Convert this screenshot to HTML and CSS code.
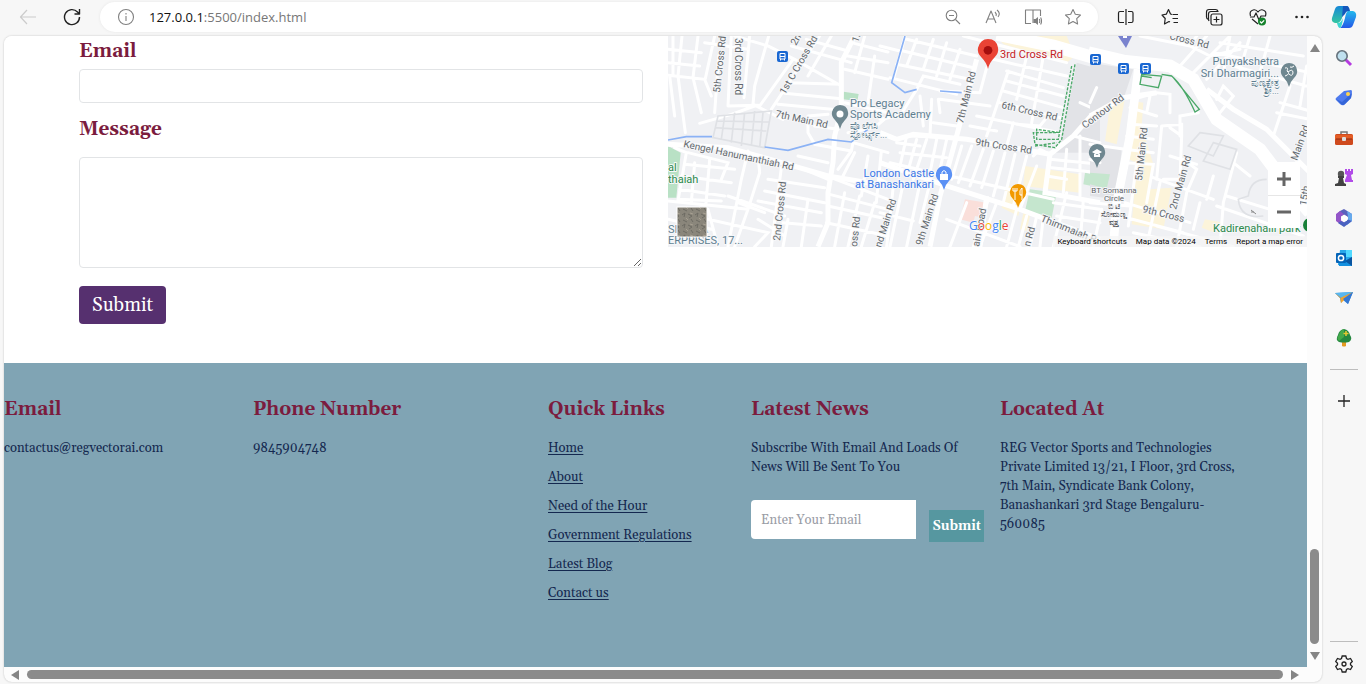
FILE: index.html
```html
<!DOCTYPE html>
<html lang="en">
<head>
<meta charset="utf-8">
<meta name="viewport" content="width=device-width, initial-scale=1">
<title>Contact</title>
<link rel="stylesheet" href="styles.css">
</head>
<body class="browser">
<header class="toolbar">
  <button class="tool nav-back" aria-label="Back"><svg width="18" height="18" viewBox="0 0 18 18"><path d="M17 9H1.500M8 2L1.500 9L8 16"/></svg></button>
  <button class="tool nav-reload" aria-label="Reload"><svg width="18" height="18" viewBox="0 0 18 18"><path d="M16.500 9A7.500 7.500 0 1 1 14.500 4L16 5.500M16.500 1V6H11.500"/></svg></button>
  <div class="address">
    <svg class="info" width="18" height="18" viewBox="0 0 18 18"><circle cx="9" cy="9" r="7.500"/><path d="M9 8V13M9 5V6.500"/></svg>
    <span class="url">127.0.0.1<span class="url-path">:5500/index.html</span></span>
    <div class="address-tools">
      <button class="tool" aria-label="Zoom out"><svg width="18" height="18" viewBox="0 0 18 18"><circle cx="7.500" cy="7.500" r="5.300"/><path d="M5 7.500H10M11.500 11.500L16 16"/></svg></button>
      <button class="tool" aria-label="Read aloud"><svg width="18" height="18" viewBox="0 0 18 18"><path d="M2 15L7 3L12 15M4 11H10M11 4Q13 6 12 8M13 2Q17 5 14 9"/></svg></button>
      <button class="tool" aria-label="Immersive reader"><svg width="18" height="18" viewBox="0 0 18 18"><path d="M7 15.500H1.500V2H9V15M9 2H16.500V8"/><path class="solid" d="M9.500 11H11.500L14 9V17L11.500 15H9.500Z"/><path d="M15.300 11Q16.300 13 15.300 15M16.600 9.500Q18.500 13 16.600 16.500"/></svg></button>
      <button class="tool" aria-label="Favourite"><svg width="18" height="18" viewBox="0 0 18 18"><path d="M9 1.500L11.300 6.300L16.500 7L12.700 10.700L13.600 16L9 13.500L4.400 16L5.300 10.700L1.500 7L6.700 6.300Z"/></svg></button>
    </div>
  </div>
  <div class="toolbar-end">
    <button class="tool" aria-label="Split screen"><svg width="18" height="18" viewBox="0 0 18 18"><path d="M7 3.500H3Q1.500 3.500 1.500 5V13Q1.500 14.500 3 14.500H7M11 3.500H14.500Q16 3.500 16 5V13Q16 14.500 14.500 14.500H11M9 1V17"/></svg></button>
    <button class="tool" aria-label="Favourites"><svg width="18" height="18" viewBox="0 0 18 18"><path d="M11.500 6.500H17M11.500 10.500H17M12.500 14.500H17M11 6.500L9.500 6L7.500 1.500L5.300 6.200L1 7L4.200 10.500L3.500 16L8 13.500L9 14"/></svg></button>
    <button class="tool" aria-label="Collections"><svg width="18" height="18" viewBox="0 0 18 18"><path d="M4 13Q3.500 12 3.500 11V6Q3.500 3.500 6 3.500H13Q12.500 1.500 10.500 1.500H4Q1.500 1.500 1.500 4V9Q1.500 11 3.500 11.500M11.500 8.500V14.500M8.500 11.500H14.500"/><rect x="6" y="6" width="11" height="11" rx="2"/></svg></button>
    <button class="tool" aria-label="Browser essentials"><svg width="18" height="18" viewBox="0 0 18 18"><path d="M1.500 8Q0 3 4 2Q7 1 9 4Q11 1 14 2Q18 3 16.500 8M1 9H5L7 5L10 12L12 8H17M3 11L9 16"/><circle class="ok" cx="13" cy="13.500" r="4"/><path class="tick" d="M11 13.500L12.500 15L15.200 12.300"/></svg></button>
    <button class="tool" aria-label="More"><svg width="18" height="18" viewBox="0 0 18 18"><g class="dots"><circle cx="3.500" cy="9" r="1.300"/><circle cx="9" cy="9" r="1.300"/><circle cx="14.500" cy="9" r="1.300"/></g></svg></button>
  </div>
  <button class="tool copilot" aria-label="Copilot"><svg class="art" width="26" height="26" viewBox="0 0 26 26">
    <defs><linearGradient id="cp1" x1="0" y1="0" x2="0" y2="1"><stop offset="0" stop-color="#1687d8"/><stop offset="1" stop-color="#35c6a1"/></linearGradient><linearGradient id="cp2" x1="0" y1="0" x2="0" y2="1"><stop offset="0" stop-color="#23b9ec"/><stop offset="1" stop-color="#2458e8"/></linearGradient></defs>
    <path fill="url(#cp1)" d="M8 2H17Q13 5 11 14Q9 19 6 19H4Q0 18 1 14L4 5Q5 2 8 2Z"/><path fill="url(#cp2)" d="M17 7H22Q26 8 25 13L22 21Q21 24 18 24H9Q12 22 14 14Q15 8 17 7Z"/><path fill="#1458bc" d="M12 2H16Q18 2 19 7H18Q15 7 14 10L11 13Z"/><path fill="#3bd5d0" d="M7 19Q10 19 12 14Q11 23 9 24Q7 24 6 19Z"/></svg></button>
</header>
<div class="workspace">
  <div class="window">
    <main class="page">
      <section class="contact">
        <form class="contact-form">
          <label class="heading" for="email">Email</label>
          <input class="field" id="email" type="email">
          <label class="heading" for="message">Message</label>
          <textarea class="field message" id="message"></textarea>
          <button class="send" type="button">Submit</button>
        </form>
        <div class="map">
<svg class="map-art" viewBox="0 0 639 211" preserveAspectRatio="xMidYMid slice" role="img" aria-label="Map of 3rd Cross Rd">
<defs>
  <g id="bus"><rect width="11" height="11" rx="2" fill="#1967d2"/><path d="M3 2.500H8V8H3ZM3 5.500H8M3.500 8V9.500M7.500 8V9.500" fill="none" stroke="#fff"/></g>
  <path id="pin" d="M0 0Q-1-5-5-9Q-9-13-8-17Q-6-24 0-24Q7-24 8-17Q9-13 5-9Q1-5 0 0Z"/>
  <pattern id="rock" width="13" height="11" patternUnits="userSpaceOnUse"><rect width="13" height="11" fill="#8a867b"/><path d="M1 3L4 1L3 5M7 2L11 4L8 6M2 8L6 10M10 7L12 10" stroke="#6c6a62" fill="none"/><path d="M5 6L7 8M9 1L12 2" stroke="#a69f91"/></pattern>
</defs>
<rect width="639" height="211" fill="#f0f1f4"/>
<g transform="scale(.33333)">
  <path fill="#b9e1c5" d="M0 330L38 350L25 485H0ZM527 167L572 174L568 195L525 190Z"/>
  <g class="road">
    <path d="M0 40L100 50M0 80L95 90M0 118L110 130L130 180M15 0V118M42 0L30 120L52 290M75 125L100 230M5 120L20 240M90 0L75 125M140 0L112 128M110 20L240 40M152 60L140 230M190 0L180 210M245 0L228 185M180 210L270 208M200 0L300 30L380 70L520 150M302 0L260 150L255 205L345 250M375 70L275 210M95 262L190 235L260 210M455 0L310 220M365 140L520 145M350 172L520 188M330 205L515 222M370 30L550 80M415 10L540 45M490 0L420 120M540 60L660 80M530 100L660 130M550 20L660 48M590 0L560 110M530 200L660 230M620 60L600 200"/>
    <path d="M420 240L480 235M420 240V290L440 325L550 345M440 270L510 280M540 290L620 275L660 240M550 345L555 320L660 350M390 360L480 380M510 400L550 345M340 395L310 632M360 380L480 430M300 430L470 455M290 465L470 500M270 495L460 530M345 560L460 570M420 490L400 632M450 410L660 490M485 475L660 520M480 510L660 550M475 560L660 600M560 350L525 420M600 360L580 480M640 345L625 500M530 470L500 632M575 480L540 632M620 500L580 632"/>
    <path d="M20 335L55 350L30 495M60 350L180 380L160 430M50 385L200 400M40 420L190 440M35 460L170 480M30 490L160 495M0 495L240 520M80 380L70 500M125 370L110 550M240 345L220 430L180 632M270 360L275 410L240 520L200 632M210 500L290 530M180 480L350 540M100 545L300 590L260 632M120 520L150 632M270 550L350 600M0 550L130 580M360 550L345 632"/>
  </g>
  <path class="lane" d="M150 240L310 225L290 335L135 305ZM140 275L295 285M170 240L160 310M200 230L190 320M230 230L220 330M260 225L250 330M285 230L275 335M145 255L305 258"/>
  <path class="avenue" d="M0 325L180 335L360 385L480 420L660 450M560 0L520 80V220L500 300L495 380L480 470V560L450 632"/>
  <path class="river" d="M0 312L55 302H132M290 333L360 343L480 310L550 318L600 280"/>
</g>
<g transform="translate(212) scale(.33333)">
  <path fill="#fcf4da" d="M350 0H560L585 60L560 80L370 25ZM435 390L600 415V470L430 450ZM380 445L430 470L415 540L365 515ZM430 530L450 540L440 585L420 580Z"/>
  <path fill="#e2e3e7" d="M590 80L660 100V350L510 350L545 315Z"/>
  <path fill="#c5e6ce" d="M450 460L530 470L515 545L435 525ZM615 410L660 420V455L610 445Z"/><path fill="#fadfda" d="M255 490L320 500L310 545L285 540L280 560L240 550Z"/>
  <g class="road">
    <path d="M0 30L60 45M80 10L290 60M70 45L280 95M50 85L270 130M30 125L230 175M75 0L40 130M110 10L80 90M160 10L130 100M200 20L170 120M240 40L210 130M250 0L560 80M340 70L560 120M380 105L550 155M380 135L550 180M370 165L550 215M320 95L300 170L180 165M110 160L130 120L240 145M180 190L330 210M290 240L540 290M270 270L350 285M360 200L540 245M400 260L380 330M410 265L480 270L500 245M385 105L320 300M440 60L410 190M490 60L455 260M0 250L60 240L110 160M120 180L130 270M155 190L150 300M160 260L230 270M175 190L180 230"/>
    <path d="M30 380L200 420M80 300L60 390M90 300L220 305M50 320L120 330M60 350L200 365M110 310L80 420M140 310L100 430M170 310L150 410M200 310L180 400M210 420L520 490M245 330L215 430M275 330L235 440M310 340L270 450M340 345L305 455M375 350L340 480M405 355L370 500M440 360L400 510M470 390L420 520M460 360L480 340L510 355M0 430L40 450L20 632M70 440L30 632M120 440L80 632M0 530L100 555M150 440L120 560M200 550L420 632M260 500L210 632M325 490L280 632M350 500L300 632M410 520L380 632M440 540L415 632M470 540L450 632M490 545L480 632M560 470L520 632M610 490L600 632M520 500L660 520M530 540L660 560M500 420L560 430M510 370L660 385M515 395L660 410M600 300V480M560 340L550 470"/>
    <path d="M600 200L645 220L640 150M640 220L660 195M580 300L660 320"/>
  </g>
  <path class="avenue" d="M0 290L50 310L100 295L260 310L510 355L580 300L660 210M290 70L230 300L180 480L150 632M320 480L300 632M510 355L495 470L660 500M0 380L200 450L420 520L660 610"/>
  <path class="trunk" d="M350-5L520 30L660 70"/>
  <path class="river" d="M75 0L35 140L75 170L110 160M180 165L245 170"/>
  <path class="trail" d="M585 85L545 310L525 335L465 325L460 290L530 290M575 90L535 310H470V280L540 290M465 330L530 320"/>
</g>
<g transform="translate(422) scale(.33333)">
  <path fill="#e2e3e7" d="M0 80L130 100L100 190L0 270ZM0 320L95 340L80 490L0 480Z"/>
  <path fill="#fcf4da" d="M60 210L105 185L80 325L45 315ZM130 195L160 200L155 270L190 385L180 460L245 455L220 580L125 565L140 380L115 370ZM345 550L400 560L375 590L335 575Z"/>
  <path fill="#c5e6ce" d="M0 410L60 415L50 458L0 445Z"/>
  <g class="road">
    <path d="M150 0L300 30L360 60L450 40M300 30L320 0M270 90L350 0M310 110L420 0M350 130L450 20M375 50L660 110M390 20L640 60M420 0L400 110M480 0L450 100M540 0L510 110M430 90L650 150M600 150L550 300M570 200L660 225M560 230L660 250M650 90L630 210M380 190L400 150L430 180L390 230M220 430L270 430L275 300L240 275M130 190L200 170L240 175V230M180 180L170 230M120 215L200 240M120 265L200 270M215 270L275 265V300M325 230L270 240V300M215 270L200 430M110 300L190 310M105 340L190 350M100 380L190 385L170 500M140 380L115 570M190 425L370 490M280 370L320 400L290 470M240 360L320 385M370 420L350 490M290 470L260 632M210 440L170 632M105 500L300 560M90 540L280 590M130 590L330 632M330 500L310 580M440 350L400 500L390 632M380 510L640 600M430 380L480 420M410 480L540 520M200 570L430 632M0 325L105 340M0 500L120 510M35 520L10 632M0 370L30 380M0 200L20 155"/>
  </g>
  <path class="lane" d="M330 290L400 300L370 360L295 330ZM370 320L440 340L420 400L340 375ZM530 430Q480 430 475 480L445 490Q450 550 520 540"/>
  <path class="avenue" d="M0 240L100 185L200 170M350 160L430 220L530 280L660 410"/>
  <path class="wide" d="M145 100L120 300L80 500L70 632"/>
  <path class="trunk" d="M-5 50L100 75L240 90L310 130L380 250L510 340L600 460L660 530"/>
  <path class="trail solid" d="M155 115L215 120L205 155L150 145ZM155 120L185 125M250 125L328 220L315 228Q280 150 245 120L215 115"/>
</g>
<use href="#bus" x="109" y="15"/><use href="#bus" x="422" y="18"/><use href="#bus" x="450" y="27"/><use href="#bus" x="472" y="27"/>
<path d="M450 0H464L458 12Z" fill="#7a83ce"/><rect x="455" y="0" width="4" height="2" fill="#fff"/>
<g transform="translate(320 33) scale(1.250)"><use href="#pin" fill="#ea4335"/><circle cy="-15" r="3.500" fill="#a50e0e"/></g>
<use href="#pin" x="172" y="93" fill="#6f8790"/><circle cx="172" cy="78" r="3.500" fill="#fff"/>
<use href="#pin" x="276" y="154" fill="#5b91f5"/><path d="M272 138H280V144H272Z" fill="#fff"/><path d="M274 138V136Q276 133 278 136V138" fill="none" stroke="#fff"/>
<use href="#pin" x="350" y="172" fill="#f29900"/><path d="M347 152V158M345 152V155H349V152M347 158V164M354 152V164M354 152Q351 154 352 159H354" fill="none" stroke="#fff"/>
<use href="#pin" x="429" y="132" fill="#6f8790"/><path d="M424 116L429 113L434 116L429 119ZM426 118V121H432V118" fill="#fff"/>
<use href="#pin" x="621" y="51" fill="#6f8790"/><path d="M617 32Q621 31 619 35Q623 38 617 40M620 36Q625 32 625 37Q624 41 621 38M622 31Q624 32 626 30" fill="none" stroke="#fff"/>
<g class="map-text">
  <text transform="translate(52 57) rotate(-84)">5th Cross Rd</text><text transform="translate(67 2) rotate(90)">3rd Cross Rd</text>
  <text transform="translate(117 59) rotate(-60)">1st C Cross Rd</text><text transform="translate(128 10) rotate(-60)">2nd</text><text transform="translate(190 7) rotate(-70)">1s</text>
  <text transform="translate(107 81) rotate(12)">7th Main Rd</text><text transform="translate(15 111) rotate(12)">Kengel Hanumanthiah Rd</text>
  <text transform="translate(112 205) rotate(-84)">2nd Cross Rd</text><text transform="translate(189 211) rotate(-84)">oss Rd</text><text transform="translate(213 212) rotate(-72)">nd Main Rd</text><text transform="translate(254 210) rotate(-72)">9th Main Rd</text>
  <text transform="translate(295 88) rotate(-76)">7th Main Rd</text><text transform="translate(333 72) rotate(13)">6th Cross Rd</text><text transform="translate(307 109) rotate(9)">9th Cross Rd</text>
  <text transform="translate(311 211) rotate(-79)">ain Road</text><text transform="translate(362 211) rotate(-75)">n Rd</text><text transform="translate(372 185) rotate(22)">Thimmaiah R</text>
  <text transform="translate(417 93) rotate(-37)">Contour Rd</text><text transform="translate(474 145) rotate(-84)">5th Main Rd</text><text transform="translate(508 174) rotate(-74)">2nd Main Rd</text>
  <text transform="translate(474 176) rotate(14)">9th Cross</text><text transform="translate(501 3) rotate(14)">Cross Rd</text><text transform="translate(629 125) rotate(-70)">Main Rd</text><text transform="translate(638 170) rotate(-80)">15th</text>
</g>
<g class="place">
  <text x="182" y="71">Pro Legacy</text><text x="182" y="82">Sports Academy</text><text class="kn" x="182" y="93">ಪ್ರೊ ಲೆಗಸಿ</text><text class="kn" x="182" y="102">ಸ್ಪೋರ್ಟ್ಸ್...</text>
  <text x="0" y="197">SI</text><text x="33" y="197">A</text><text x="0" y="208">ERPRISES, 17...</text>
  <text x="611" y="29" text-anchor="end">Punyakshetra</text><text x="611" y="41" text-anchor="end">Sri Dharmagiri...</text><text class="kn" x="611" y="50" text-anchor="end">ಪುಣ್ಯಕ್ಷೇತ್ರ</text><text class="kn" x="611" y="58" text-anchor="end">ಶ್ರೀ...</text>
  <g class="shop"><text x="266" y="141" text-anchor="end">London Castle</text><text x="266" y="152" text-anchor="end">at Banashankari</text></g>
  <g class="park"><text x="0" y="135">al</text><text x="0" y="147">thaiah</text><text x="545" y="196">Kadirenahalli park</text></g>
  <text class="red" x="332" y="22">3rd Cross Rd</text>
  <g class="circle-name"><text x="446" y="157">BT Somanna</text><text x="446" y="165">Circle</text><text x="446" y="173">ಬಿ ಟಿ</text><text x="446" y="181">ಸೋಮಣ್ಣ</text><text x="446" y="189">ವೃತ್ತ</text></g>
</g>
<circle cx="642" cy="189" r="7" fill="#188038"/>
<path d="M583 174L588 178M583 176H586" stroke="#888"/>
<rect x="9" y="171" width="30" height="30" fill="url(#rock)" stroke="#fff"/>
<text class="google" x="301" y="194"><tspan fill="#4285f4">G</tspan><tspan fill="#ea4335">o</tspan><tspan fill="#fbbc04">o</tspan><tspan fill="#4285f4">g</tspan><tspan fill="#34a853">l</tspan><tspan fill="#ea4335">e</tspan></text>
</svg>
          <div class="map-zoom"><button aria-label="Zoom in"><svg width="16" height="16" viewBox="0 0 16 16"><path d="M1 8H15M8 1V15"/></svg></button><button aria-label="Zoom out"><svg width="16" height="16" viewBox="0 0 16 16"><path d="M1 8H15"/></svg></button></div>
          <div class="map-legal"><a href="#">Keyboard shortcuts</a><span>Map data ©2024</span><a href="#">Terms</a><a href="#">Report a map error</a></div>
        </div>
      </section>
      <footer class="footer">
        <section><h2 class="heading">Email</h2><p>contactus@regvectorai.com</p></section>
        <section><h2 class="heading">Phone Number</h2><p>9845904748</p></section>
        <nav><h2 class="heading">Quick Links</h2><ul class="links"><li><a href="#">Home</a></li><li><a href="#">About</a></li><li><a href="#">Need of the Hour</a></li><li><a href="#">Government Regulations</a></li><li><a href="#">Latest Blog</a></li><li><a href="#">Contact us</a></li></ul></nav>
        <section><h2 class="heading">Latest News</h2><p>Subscribe With Email And Loads Of<br>News Will Be Sent To You</p><form class="subscribe"><input type="email" placeholder="Enter Your Email" aria-label="Enter Your Email"><button type="button">Submit</button></form></section>
        <section><h2 class="heading">Located At</h2><p>REG Vector Sports and Technologies<br>Private Limited 13/21, I Floor, 3rd Cross,<br>7th Main, Syndicate Bank Colony,<br>Banashankari 3rd Stage Bengaluru-<br>560085</p></section>
      </footer>
    </main>
    <div class="scroll-y"><svg width="10" height="8" viewBox="0 0 10 8"><path d="M5 0L10 8H0Z"/></svg><div class="track"><div class="thumb"></div></div><svg width="10" height="8" viewBox="0 0 10 8"><path d="M0 0H10L5 8Z"/></svg></div>
    <div class="scroll-x"><svg width="8" height="10" viewBox="0 0 8 10"><path d="M8 0V10L0 5Z"/></svg><div class="thumb"></div><svg width="8" height="10" viewBox="0 0 8 10"><path d="M0 0L8 5L0 10Z"/></svg></div>
  </div>
  <aside class="sidebar">
    <button aria-label="Search"><svg width="18" height="18" viewBox="0 0 18 18"><path d="M10 10L16 16" stroke="#b53be0" stroke-width="3"/><circle cx="7" cy="7" r="5.200" fill="#bfe0ef" stroke="#65727c" stroke-width="1.600"/></svg></button>
    <button aria-label="Shopping"><svg width="18" height="18" viewBox="0 0 18 18"><path d="M1 9L9 2L16 1Q17 1 17 3L16 9L9 16Q7 17 5 15L1 11Q0 10 1 9Z" fill="#4f7bee"/><path d="M1 10L6 15Q8 17 10 15L16 9L17 4L7 13Z" fill="#3565d8"/><circle cx="13" cy="5" r="2" fill="#ffd34d"/></svg></button>
    <button aria-label="Tools"><svg width="18" height="18" viewBox="0 0 18 18"><path d="M6 5V3H12V5" fill="none" stroke="#777" stroke-width="1.500"/><rect x="0" y="5" width="18" height="11" rx="1.500" fill="#cf4a1e"/><path d="M0 6H18V10H0Z" fill="#e45d26"/><path d="M1 10H17" stroke="#8c2d14"/><rect x="7" y="8" width="4" height="4" rx="1" fill="#ddd"/></svg></button>
    <button aria-label="Games"><svg width="18" height="18" viewBox="0 0 18 18"><path d="M10 0H12V2H13V0H15V2H16V0H18V5L16 6L17 11H18V13H10V11L12 6L10 5Z" fill="#b14be8"/><circle cx="6" cy="5" r="3.200" fill="#565656"/><path d="M3 7H9V9H8L9 14L11 15V17H0V15L3 14L4 9H3Z" fill="#424242"/></svg></button>
    <button aria-label="Microsoft 365"><svg width="18" height="18" viewBox="0 0 18 18"><path d="M5 2L9 0L17 5L13 8L9 5.500L5 8L1 6Z" fill="#5b63bd"/><path d="M12 2L17 5V12L12 16L9.500 13L13 10.500V7.500Z" fill="#66a9ec"/><path d="M5 2L1 5V12L5 15L9 17L10 14L6 11.500V7L9 5.500Z" fill="#9355c8"/><path d="M6 12L9 13.500L13 10.500L17 12L9 18L3 14Z" fill="#4a62c0"/><circle cx="9.500" cy="9.500" r="3" fill="#fff"/></svg></button>
    <button aria-label="Outlook"><svg width="18" height="18" viewBox="0 0 18 18"><path d="M5 1H17V16H3Z" fill="#28a8ea"/><path d="M11 1H17V8H11Z" fill="#50d9ff"/><path d="M3 9L10 12L17 8V17H4Z" fill="#1490df"/><path d="M10 12L17 17V8Z" fill="#0a55a0"/><rect x="1" y="4" width="10" height="10" rx="1" fill="#0364b8"/><circle cx="6" cy="9" r="2.600" fill="none" stroke="#fff" stroke-width="1.500"/></svg></button>
    <button aria-label="Drop"><svg width="18" height="18" viewBox="0 0 18 18"><path d="M0 4L18 3L13 15L8 11L6 14L5 9Z" fill="#2d8fdc"/><path d="M0 4L18 3L6 9Z" fill="#58b7f1"/><path d="M0 4L5 9L18 3L6 14L5 8Z" fill="#f0a331"/><path d="M8 10L18 3L13 15Z" fill="#3677d2"/></svg></button>
    <button aria-label="Tree"><svg width="18" height="18" viewBox="0 0 18 18"><path d="M7 11H11V17Q9 18 7 17Z" fill="#e49b22"/><path d="M9 0Q14 1 15 6Q18 10 14 13Q9 14 4 13Q0 11 3 6Q4 1 9 0Z" fill="#258840"/><path d="M9 0Q5 1 4 6Q1 9 4 12L9 8Z" fill="#43a94b"/><path d="M11 2V7M8.500 4.500H13.500" stroke="#e8c832" stroke-width="1.500"/></svg></button>
    <hr>
    <button class="line" aria-label="Customise"><svg width="18" height="18" viewBox="0 0 18 18"><path d="M3 9H15M9 3V15"/></svg></button>
    <hr class="push">
    <button class="line" aria-label="Settings"><svg width="18" height="18" viewBox="0 0 18 18"><path d="M7.200 1H10.800L11.500 3.500L13 4.300L15.500 3.500L17.300 6.500L15.500 8.200V9.800L17.300 11.500L15.500 14.500L13 13.700L11.500 14.500L10.800 17H7.200L6.500 14.500L5 13.700L2.500 14.500L.7 11.500L2.500 9.800V8.200L.7 6.500L2.500 3.500L5 4.300L6.500 3.500Z"/><circle cx="9" cy="9" r="2"/></svg></button>
  </aside>
</div>
</body>
</html>
```
FILE: styles.css
```css
* { box-sizing: border-box; }
button { font: inherit; border: 0; padding: 0; background: none; color: inherit; cursor: pointer; }
svg { display: block; }

.browser {
  margin: 0;
  min-height: 100vh;
  display: flex;
  flex-direction: column;
  background: #f7f7f7;
  color: #14284f;
  font-family: Georgia, Gelasio, "Liberation Serif", serif;
  overflow: hidden;
}

/* Toolbar */
.toolbar { display: flex; align-items: center; height: 36px; padding: 0 9px 2px 19px; }
.tool svg, .info { fill: none; stroke: #222; stroke-width: 1.2; stroke-linejoin: round; }
.tool .art { stroke: none; }
.nav-back svg { stroke: #ccc; }
.nav-reload { margin: 0 19px 0 26px; }
.nav-reload svg { stroke-width: 1.4; }
.address {
  flex: 1;
  display: flex;
  align-items: center;
  height: 30px;
  padding: 0 16px 0 17px;
  border-radius: 15px;
  background: #fff;
  box-shadow: 0 0 3px #e6e6e6;
}
.info, .address-tools svg { stroke: #808080; stroke-width: 1.1; }
.solid { fill: #808080; stroke: none; }
.url { flex: 1; margin-left: 14px; font: 13px/18px "Open Sans", "Noto Sans", sans-serif; color: #111; }
.url-path { color: #777; }
.address-tools { display: flex; gap: 22px; }
.toolbar-end { display: flex; gap: 26px; margin: 0 20px 0 19px; }
.tool .ok { fill: #15822c; stroke: none; }
.tick { stroke: #fff; }
.dots { fill: #222; stroke: none; }

/* Page window */
.workspace { flex: 1; display: flex; padding: 0 0 2px 4px; }
.window {
  flex: 1;
  min-width: 0;
  display: grid;
  grid-template: 1fr 15px / minmax(0, 1fr) 15px;
  background: #fcfcfc;
  border-radius: 8px;
  overflow: hidden;
  box-shadow: 0 0 2px #bbb;
}
.page { display: flex; flex-direction: column; background: #fff; }
.scroll-y { display: flex; flex-direction: column; align-items: center; padding: 8px 0 7px; }
.scroll-y svg, .scroll-x svg { fill: #858585; }
.track { flex: 1; display: flex; flex-direction: column; justify-content: flex-end; padding-bottom: 8px; }
.thumb { background: #8b8b8b; border-radius: 5px; }
.track .thumb { width: 9px; height: 16%; }
.scroll-x { display: flex; align-items: center; gap: 8px; padding: 0 8px 0 7px; }
.scroll-x .thumb { flex: 1; height: 9px; }

/* Contact */
.heading { margin: 0; color: #7b1c3e; font-size: 19px; font-weight: 700; line-height: 28px; }
.contact { display: grid; grid-template-columns: 564fr 639fr; column-gap: 25px; align-items: start; padding-left: 75px; }
.contact-form { display: flex; flex-direction: column; align-items: flex-start; padding: 1px 0 39px; }
.field { width: 100%; height: 34px; margin: 4px 0 12px; border: 1px solid #e2e4e6; border-radius: 4px; background: #fff; }
.field.message { height: 111px; margin: 14px 0 18px; resize: vertical; }
.send { padding: 4px 13px; border-radius: 4px; background: #56306f; color: #fff; font-size: 19px; line-height: 30px; }

/* Map */
.map { position: relative; height: 211px; overflow: hidden; }
.map-art { width: 100%; height: 100%; font-family: Roboto, "Liberation Sans", sans-serif; }
.road { fill: none; stroke: #fff; stroke-width: 9; stroke-linecap: round; }
.avenue { fill: none; stroke: #fff; stroke-width: 15; }
.wide { fill: none; stroke: #fff; stroke-width: 26; }
.trunk { fill: none; stroke: #fff; stroke-width: 38; }
.lane { fill: none; stroke: #dfe1e5; stroke-width: 5; }
.river { fill: none; stroke: #8bb2f5; stroke-width: 5; }
.trail { fill: none; stroke: #4aa868; stroke-width: 4; stroke-dasharray: 9 4; }
.trail.solid { fill: none; stroke: #4aa868; stroke-dasharray: none; }
.map-text, .place { paint-order: stroke; stroke: #f6f7f9; stroke-width: 2px; stroke-linejoin: round; }
.map-text { fill: #62676c; font-size: 10px; }
.place { fill: #5f7f91; font-size: 11px; }
.kn { font-size: 9px; }
.shop { fill: #3b78e7; }
.park { fill: #2c8a4b; }
.red { fill: #c5221f; }
.circle-name { fill: #5f6368; font-size: 8px; text-anchor: middle; }
.google { font: 500 12px "Open Sans", sans-serif; paint-order: stroke; stroke: #fff; stroke-width: 1px; }
.map-zoom { position: absolute; right: 7px; bottom: 19px; width: 32px; background: #fff; }
.map-zoom button { display: grid; place-items: center; width: 100%; height: 33px; }
.map-zoom button + button { border-top: 1px solid #e6e6e6; }
.map-zoom svg { fill: none; stroke: #666; stroke-width: 3; }
.map-legal {
  position: absolute;
  right: 0;
  bottom: 0;
  display: flex;
  gap: 9px;
  padding: 0 4px;
  background: rgba(245, 245, 245, .7);
  color: #000;
  font: 8px/11px Roboto, "Liberation Sans", sans-serif;
}
.map-legal a { color: inherit; text-decoration: none; }

/* Footer */
.footer {
  flex: 1;
  display: grid;
  grid-template-columns: 249fr 295fr 203fr 249fr 307fr;
  padding-top: 32px;
  background: #80a4b4;
  font-size: 13px;
  line-height: 19px;
  white-space: nowrap;
}
.footer > * { min-width: 0; }
.footer p { margin: 16px 0 0; }
.links { display: flex; flex-direction: column; gap: 10px; margin: 16px 0 0; padding: 0; list-style: none; }
.links a { color: inherit; text-underline-offset: 2px; }
.subscribe { display: flex; align-items: flex-end; gap: 13px; margin-top: 23px; padding-right: 16px; }
.subscribe input {
  flex: 1;
  min-width: 0;
  height: 39px;
  margin-bottom: 3px;
  padding: 0 10px;
  border: 0;
  border-radius: 4px 0 0 4px;
  background: #fff;
  font: inherit;
}
.subscribe input::placeholder { color: #9a9da6; }
.subscribe button { height: 32px; padding: 0 3px; background: #5697a0; color: #fff; font-weight: 700; }

/* Sidebar */
.sidebar { display: flex; flex-direction: column; align-items: center; gap: 22px; width: 44px; padding: 13px 0 9px; }
.sidebar hr { width: 28px; margin: 0; border: 0; border-top: 1px solid #bdbdbd; }
.sidebar .push { margin-top: auto; }
.sidebar .push + button { margin-top: -9px; }
.line svg { fill: none; stroke: #222; stroke-width: 1.3; }
```
